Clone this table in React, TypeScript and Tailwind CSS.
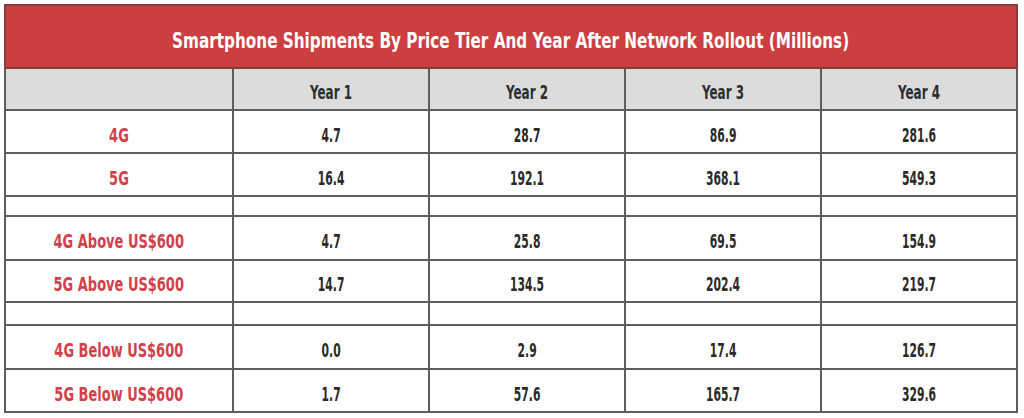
import React from "react";

const ROWS: { label: string; values: string[] }[] = [
  { label: "4G", values: ["4.7", "28.7", "86.9", "281.6"] },
  { label: "5G", values: ["16.4", "192.1", "368.1", "549.3"] },
  { label: "", values: [] },
  { label: "4G Above US$600", values: ["4.7", "25.8", "69.5", "154.9"] },
  { label: "5G Above US$600", values: ["14.7", "134.5", "202.4", "219.7"] },
  { label: "", values: [] },
  { label: "4G Below US$600", values: ["0.0", "2.9", "17.4", "126.7"] },
  { label: "5G Below US$600", values: ["1.7", "57.6", "165.7", "329.6"] },
];

const HEIGHTS = ["h-[43px]", "h-[43px]", "h-[20px]", "h-[44px]", "h-[42px]", "h-[23px]", "h-[44px]", "h-[43px]"];

const cell = "border-2 border-[#5e5e5e] p-0 text-center align-middle";

export default function App() {
  return (
    <div className="h-[418px] w-[1024px] bg-white pl-[4px] pt-[4px] font-['DejaVu_Sans_Condensed','DejaVu_Sans',sans-serif] font-bold">
      <table className="w-[1014px] table-fixed border-collapse border-2 border-[#9a9a9a]">
        <colgroup>
          <col className="w-[228px]" />
          <col className="w-[196px]" />
          <col className="w-[196px]" />
          <col className="w-[196px]" />
          <col />
        </colgroup>
        <thead>
          <tr className="h-[63px] bg-[#cc3e40]">
            <th colSpan={5} className="border-2 border-[#8a3a3a] pt-[8px] text-[22px] font-bold leading-none text-white">
              <span className="inline-block scale-x-[0.77] whitespace-nowrap">
                Smartphone Shipments By Price Tier And Year After Network Rollout (Millions)
              </span>
            </th>
          </tr>
          <tr className="h-[42px] bg-[#dcdcdd] text-[19px] leading-none text-[#2e2e2e]">
            <th className={cell}></th>
            {["Year 1", "Year 2", "Year 3", "Year 4"].map((y) => (
              <th key={y} className={`${cell} pt-[7px]`}>
                <span className="inline-block scale-x-[0.7]">{y}</span>
              </th>
            ))}
          </tr>
        </thead>
        <tbody className="text-[19px] leading-none">
          {ROWS.map((row, i) =>
            row.label === "" ? (
              <tr key={i} className={HEIGHTS[i]}>
                {[0, 1, 2, 3, 4].map((j) => (
                  <td key={j} className={cell}></td>
                ))}
              </tr>
            ) : (
              <tr key={i} className={HEIGHTS[i]}>
                <td className={`${cell} pt-[7px] text-[#d2414a]`}>
                  <span className="inline-block scale-x-[0.76] whitespace-nowrap">{row.label}</span>
                </td>
                {row.values.map((v, j) => (
                  <td key={j} className={`${cell} pt-[7px] text-[#2a2a2a]`}>
                    <span className="inline-block scale-x-[0.63]">{v}</span>
                  </td>
                ))}
              </tr>
            ),
          )}
        </tbody>
      </table>
    </div>
  );
}
